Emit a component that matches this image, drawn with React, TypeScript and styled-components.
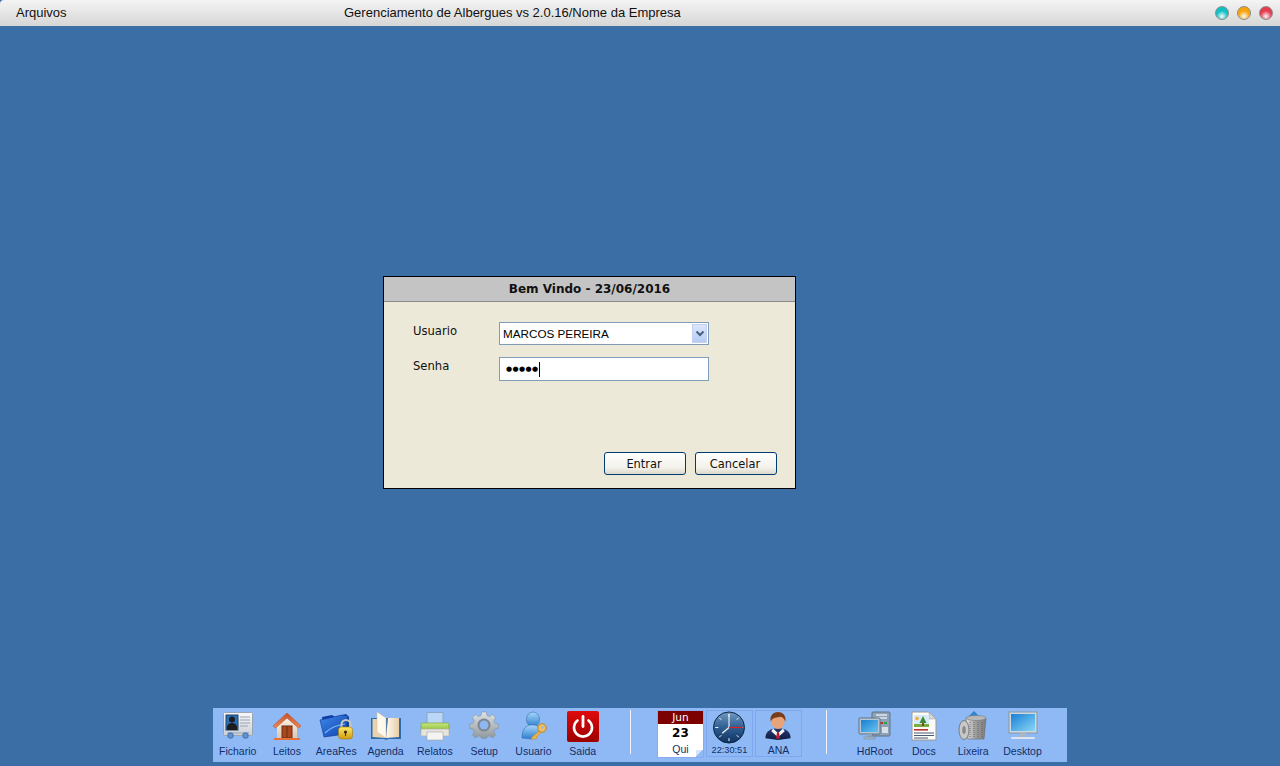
import * as React from "react";
import styled, { createGlobalStyle } from "styled-components";

const GlobalStyle = createGlobalStyle`
  html, body {
    margin: 0;
    padding: 0;
    height: 100%;
    overflow: hidden;
    background: #3a6ea5;
  }
  body {
    font-family: "Liberation Sans", Arial, sans-serif;
  }
`;

//************Icons***********
const FicharioIcon = () => (
  <svg width="32" height="30" viewBox="0 0 32 30">
    <defs>
      <linearGradient id="fic" x1="0" y1="0" x2="0" y2="1">
        <stop offset="0" stopColor="#f8f9fb" />
        <stop offset="1" stopColor="#c9cfd8" />
      </linearGradient>
    </defs>
    <rect x="1.5" y="1.5" width="29" height="23" rx="1" fill="url(#fic)" stroke="#9aa5b3" />
    <rect x="4" y="4" width="12" height="15" fill="#2a70b8" stroke="#1c3f68" />
    <circle cx="10" cy="8.5" r="3" fill="#1d1d1d" />
    <path d="M5 19v-3c0-2 2-4 5-4s5 2 5 4v3z" fill="#1d1d1d" />
    <path d="M18 6h10M18 9h10M18 12h10M18 15h8M5 22h22" stroke="#9aa3b2" strokeWidth="1" />
    <rect x="6" y="22" width="5" height="5" rx="1.5" fill="#5f93d1" stroke="#3b6ca8" />
    <rect x="21" y="22" width="5" height="5" rx="1.5" fill="#5f93d1" stroke="#3b6ca8" />
  </svg>
);

const LeitosIcon = () => (
  <svg width="32" height="30" viewBox="0 0 32 30">
    <defs>
      <linearGradient id="roof" x1="0" y1="0" x2="0" y2="1">
        <stop offset="0" stopColor="#c8502c" />
        <stop offset="1" stopColor="#ee8a55" />
      </linearGradient>
      <linearGradient id="wall" x1="0" y1="0" x2="0" y2="1">
        <stop offset="0" stopColor="#fff6ea" />
        <stop offset="1" stopColor="#dcc8b2" />
      </linearGradient>
    </defs>
    <path d="M6 14L16 5l10 9v13H6z" fill="url(#wall)" />
    <path d="M2 15L16 2l14 13-2.5 2L16 7 4.5 17z" fill="url(#roof)" stroke="#b5502a" strokeWidth="0.6" />
    <rect x="11" y="15" width="10" height="12" fill="#a8481c" stroke="#6f2d10" />
    <path d="M16 15v12" stroke="#6f2d10" />
    <rect x="3" y="27" width="26" height="2" fill="#e8703a" />
  </svg>
);

const AreaResIcon = () => (
  <svg width="34" height="30" viewBox="0 0 34 30">
    <defs>
      <linearGradient id="folder" x1="0" y1="0" x2="1" y2="1">
        <stop offset="0" stopColor="#3f8ae8" />
        <stop offset="1" stopColor="#0c3fb0" />
      </linearGradient>
      <linearGradient id="gold" x1="0" y1="0" x2="0" y2="1">
        <stop offset="0" stopColor="#ffe866" />
        <stop offset="1" stopColor="#d09a10" />
      </linearGradient>
    </defs>
    <path d="M3 6l10-2 3 2 11-3 3 3v17H5z" fill="#0d3fa5" />
    <path d="M1 9l22-5 6 1-2 18-22 3z" fill="url(#folder)" stroke="#0c3590" strokeWidth="0.6" />
    <path d="M6 22c6-6 12-8 20-9" stroke="#7fb6f5" strokeWidth="1.2" fill="none" />
    <path d="M22.5 17v-3.5a4.5 4.5 0 0 1 9 0V17" fill="none" stroke="#c8c8b8" strokeWidth="2" />
    <rect x="19.5" y="16" width="14" height="12" rx="3" fill="url(#gold)" stroke="#a67a08" strokeWidth="0.6" />
    <circle cx="26.5" cy="21" r="1.6" fill="#3a2a04" />
    <rect x="26" y="21" width="1" height="4" fill="#3a2a04" />
  </svg>
);

const AgendaIcon = () => (
  <svg width="32" height="30" viewBox="0 0 32 30">
    <defs>
      <linearGradient id="page" x1="0" y1="0" x2="1" y2="0">
        <stop offset="0" stopColor="#fffaf0" />
        <stop offset="1" stopColor="#e8cda6" />
      </linearGradient>
    </defs>
    <path d="M1 7h30v21H18l-2 1-2-1H1z" fill="#2e6ba8" />
    <path d="M2.5 8h11l2 19-13-1z" fill="#e9d2b0" />
    <path d="M16 27l13-1V7H18z" fill="url(#page)" />
    <path d="M7 1l9 6v20l-9-6z" fill="#fff9ec" stroke="#d4bb95" strokeWidth="0.5" />
  </svg>
);

const RelatosIcon = () => (
  <svg width="32" height="30" viewBox="0 0 32 30">
    <defs>
      <linearGradient id="printer" x1="0" y1="0" x2="0" y2="1">
        <stop offset="0" stopColor="#cbe87c" />
        <stop offset="1" stopColor="#76b02a" />
      </linearGradient>
    </defs>
    <rect x="8" y="1.5" width="16" height="12" fill="#bcd6f5" stroke="#88a7cc" />
    <rect x="2" y="12" width="28" height="10" rx="1.5" fill="url(#printer)" stroke="#6b9a2c" strokeWidth="0.6" />
    <rect x="2" y="18" width="28" height="7" fill="#e6e4dc" stroke="#b0aea4" strokeWidth="0.6" />
    <rect x="8" y="21" width="16" height="8" fill="#f4f4f2" stroke="#a5a5a0" strokeWidth="0.6" />
  </svg>
);

const SetupIcon = () => (
  <svg width="32" height="30" viewBox="0 0 32 30">
    <defs>
      <linearGradient id="gear" x1="0" y1="0" x2="0" y2="1">
        <stop offset="0" stopColor="#dfe3e6" />
        <stop offset="1" stopColor="#8f979d" />
      </linearGradient>
    </defs>
    <path
      d="M13.5 1h5l.8 4 2.8 1.2 3.4-2.3 3.5 3.5-2.3 3.4 1.2 2.8 4 .8v5l-4 .8-1.2 2.8 2.3 3.4-3.5 3.5-3.4-2.3-2.8 1.2-.8 1.7h-5l-.8-1.7-2.8-1.2-3.4 2.3-3.5-3.5 2.3-3.4-1.2-2.8-4-.8v-5l4-.8 1.2-2.8-2.3-3.4 3.5-3.5 3.4 2.3 2.8-1.2z"
      transform="translate(1.6 0) scale(0.9)"
      fill="url(#gear)"
      stroke="#858c92"
      strokeWidth="0.6"
    />
    <circle cx="16" cy="14" r="6.5" fill="#7d858b" />
    <circle cx="16" cy="14" r="4.5" fill="#8db8f2" />
  </svg>
);

const UsuarioIcon = () => (
  <svg width="30" height="30" viewBox="0 0 30 30">
    <defs>
      <linearGradient id="person" x1="0" y1="0" x2="0" y2="1">
        <stop offset="0" stopColor="#a9d6fa" />
        <stop offset="1" stopColor="#2a7ed0" />
      </linearGradient>
    </defs>
    <ellipse cx="15" cy="8.5" rx="6.5" ry="7.5" fill="url(#person)" stroke="#3270b0" strokeWidth="0.6" />
    <path d="M4 27c0-8 3-12 8-13h5c3 1 5 3 6 5l-9 9z" fill="url(#person)" stroke="#2e6cac" strokeWidth="0.6" />
    <circle cx="24" cy="17" r="4.2" fill="#f0c060" stroke="#b8831e" />
    <circle cx="24.5" cy="16.5" r="1.2" fill="#8db8f2" />
    <path d="M21 20l-8 7 1.8 1.8 1.5-1.2 1.2 1 1.5-1.5-.8-1 4.5-4z" fill="#f0b048" stroke="#b8831e" strokeWidth="0.5" />
  </svg>
);

const SaidaIcon = () => (
  <svg width="32" height="31" viewBox="0 0 32 31">
    <defs>
      <linearGradient id="power" x1="0" y1="0" x2="0" y2="1">
        <stop offset="0" stopColor="#e00a0a" />
        <stop offset="1" stopColor="#9c0000" />
      </linearGradient>
    </defs>
    <rect x="0" y="0" width="32" height="31" rx="2" fill="url(#power)" />
    <path d="M10.5 9.5a9 9 0 1 0 11 0" fill="none" stroke="#fff" strokeWidth="2.6" strokeLinecap="round" />
    <path d="M16 5.5v10" stroke="#fff" strokeWidth="2.8" strokeLinecap="round" />
  </svg>
);

const ClockIcon = () => (
  <svg width="34" height="34" viewBox="0 0 34 34">
    <defs>
      <linearGradient id="clockface" x1="0" y1="0" x2="0" y2="1">
        <stop offset="0" stopColor="#7199c2" />
        <stop offset="0.5" stopColor="#2f5f93" />
        <stop offset="1" stopColor="#0e3260" />
      </linearGradient>
    </defs>
    <circle cx="17" cy="17" r="16" fill="url(#clockface)" stroke="#0c2440" />
    <path d="M17 3v3M17 28v3M3 17h3M28 17h3M7 7l2 2M27 7l-2 2M7 27l2-2M27 27l-2-2" stroke="#fff" strokeWidth="1" />
    <path d="M17 17V3" stroke="#e8eef5" strokeWidth="1.2" />
    <path d="M17 17l-7 6" stroke="#f0f0f0" strokeWidth="1.4" />
    <path d="M17 17h14" stroke="#e02020" strokeWidth="1.2" />
  </svg>
);

const AnaIcon = () => (
  <svg width="30" height="32" viewBox="0 0 30 32">
    <defs>
      <linearGradient id="suit" x1="0" y1="0" x2="0" y2="1">
        <stop offset="0" stopColor="#26386e" />
        <stop offset="1" stopColor="#101c44" />
      </linearGradient>
    </defs>
    <path d="M2 28c0-6 4-9 9-10h8c5 1 9 4 9 10l-13 2z" fill="url(#suit)" />
    <path d="M10 18l5 5 5-5 2 3-7 6-7-6z" fill="#f2f2f2" />
    <path d="M14 22h2l1 6-2 1-2-1z" fill="#c01c28" />
    <ellipse cx="15" cy="10" rx="7" ry="8.5" fill="#e8a478" />
    <path d="M7.5 11C6 4 11 1 15 1s9 3 7.5 10c-1-3-2.5-4.5-5-5-3 1-8 0-10 5z" fill="#7a3d1a" />
  </svg>
);

const HdRootIcon = () => (
  <svg width="34" height="30" viewBox="0 0 34 30">
    <defs>
      <linearGradient id="screen1" x1="0" y1="0" x2="1" y2="1">
        <stop offset="0" stopColor="#1a7fd0" />
        <stop offset="1" stopColor="#66c4f2" />
      </linearGradient>
    </defs>
    <rect x="14" y="1" width="18" height="24" rx="1" fill="#8ea2b8" stroke="#5f7286" />
    <path d="M18 4h11M18 7h11" stroke="#dfe7ef" strokeWidth="1.4" />
    <rect x="22" y="11" width="3" height="2" fill="#c83030" />
    <rect x="26" y="11" width="3" height="2" fill="#30a040" />
    <rect x="24" y="16" width="6" height="6" fill="#d8dfe6" />
    <rect x="1" y="7" width="21" height="16" rx="1" fill="#b8c6d4" stroke="#5f7286" />
    <rect x="3" y="9" width="17" height="12" fill="url(#screen1)" />
    <rect x="9" y="23" width="5" height="3" fill="#8ea2b8" />
    <rect x="6" y="26" width="11" height="2" fill="#a8b8c8" stroke="#6f8296" strokeWidth="0.5" />
  </svg>
);

const DocsIcon = () => (
  <svg width="28" height="30" viewBox="0 0 28 30">
    <path d="M2 1h17l7 7v21H2z" fill="#fbfbf8" stroke="#9a9a94" />
    <path d="M19 1v7h7z" fill="#d8d8d4" stroke="#9a9a94" strokeWidth="0.5" />
    <rect x="4" y="4" width="15" height="12" fill="#d6eaf8" />
    <circle cx="7" cy="7.5" r="1.8" fill="#f0b030" />
    <path d="M4 16h15v-3H4z" fill="#7cae3c" />
    <path d="M13 5l-3.5 7h7z" fill="#3e8a34" />
    <rect x="12" y="12" width="2" height="3" fill="#7a4a20" />
    <rect x="4" y="18" width="14" height="1.6" fill="#c03030" />
    <path d="M4 22h20M4 24.5h20M4 27h14" stroke="#4a5a78" strokeWidth="1" />
  </svg>
);

const LixeiraIcon = () => (
  <svg width="32" height="32" viewBox="0 0 32 32">
    <defs>
      <linearGradient id="bin" x1="0" y1="0" x2="1" y2="0">
        <stop offset="0" stopColor="#e6e6e6" />
        <stop offset="0.5" stopColor="#9c9c9c" />
        <stop offset="1" stopColor="#7e7e7e" />
      </linearGradient>
    </defs>
    <path d="M17 0l6 6H11z" fill="#2f86d0" />
    <path d="M9 7h20l-2 21H11z" fill="url(#bin)" stroke="#666" strokeWidth="0.6" />
    <ellipse cx="19" cy="7" rx="10" ry="2.5" fill="#b8b8b8" stroke="#777" strokeWidth="0.6" />
    <path d="M13 11v15M17 11v15M21 11v15M25 11v15" stroke="#666" strokeWidth="1" strokeDasharray="1 1" />
    <ellipse cx="7" cy="19" rx="5" ry="9.5" fill="#c8c8c8" stroke="#7a7a7a" />
    <ellipse cx="7" cy="19" rx="1.8" ry="4" fill="#8a8a8a" />
  </svg>
);

const DesktopIcon = () => (
  <svg width="32" height="30" viewBox="0 0 32 30">
    <defs>
      <linearGradient id="screen2" x1="0" y1="0" x2="1" y2="1">
        <stop offset="0" stopColor="#1880d6" />
        <stop offset="1" stopColor="#8ad6f5" />
      </linearGradient>
    </defs>
    <rect x="2" y="1" width="28" height="21" fill="#cfd8e0" stroke="#8595a4" />
    <rect x="4" y="3" width="24" height="17" fill="url(#screen2)" />
    <rect x="13" y="22" width="6" height="4" fill="#aab6c0" />
    <rect x="4" y="26" width="24" height="2" rx="1" fill="#dfe5ea" />
  </svg>
);

const leftItems = [
  { label: "Fichario", icon: <FicharioIcon /> },
  { label: "Leitos", icon: <LeitosIcon /> },
  { label: "AreaRes", icon: <AreaResIcon /> },
  { label: "Agenda", icon: <AgendaIcon /> },
  { label: "Relatos", icon: <RelatosIcon /> },
  { label: "Setup", icon: <SetupIcon /> },
  { label: "Usuario", icon: <UsuarioIcon /> },
  { label: "Saida", icon: <SaidaIcon /> },
];

const rightItems = [
  { label: "HdRoot", icon: <HdRootIcon /> },
  { label: "Docs", icon: <DocsIcon /> },
  { label: "Lixeira", icon: <LixeiraIcon /> },
  { label: "Desktop", icon: <DesktopIcon /> },
];

const App: React.FunctionComponent = () => {
  return (
    <Page>
      <GlobalStyle />
      <TitleBar>
        <MenuLabel>Arquivos</MenuLabel>
        <AppTitle>Gerenciamento de Albergues vs 2.0.16/Nome da Empresa</AppTitle>
        <Lights>
          <Light color="#10c0c4" />
          <Light color="#f7a408" />
          <Light color="#e63c50" />
        </Lights>
      </TitleBar>

      <Desktop>
        <Dialog>
          <DialogHeader>Bem Vindo - 23/06/2016</DialogHeader>
          <DialogBody>
            <Form>
              <FieldLabel>Usuario</FieldLabel>
              <Field>
                MARCOS PEREIRA
                <DropButton>
                  <svg width="10" height="8" viewBox="0 0 10 8">
                    <path d="M1.5 1.5L5 5l3.5-3.5" fill="none" stroke="#4a5f85" strokeWidth="2" />
                  </svg>
                </DropButton>
              </Field>
              <FieldLabel>Senha</FieldLabel>
              <PasswordField>
                <Dots>●●●●●</Dots>
                <Caret />
              </PasswordField>
            </Form>
            <Buttons>
              <Button>Entrar</Button>
              <Button>Cancelar</Button>
            </Buttons>
          </DialogBody>
        </Dialog>
      </Desktop>

      <Dock>
        <LeftGroup>
          {leftItems.map((item) => (
            <DockItem key={item.label}>
              <DockIcon>{item.icon}</DockIcon>
              <DockLabel>{item.label}</DockLabel>
            </DockItem>
          ))}
        </LeftGroup>
        <Divider />
        <Status>
          <Calendar>
            <CalMonth>Jun</CalMonth>
            <CalDay>23</CalDay>
            <CalWeek>Qui</CalWeek>
          </Calendar>
          <StatusBox>
            <ClockIcon />
            <ClockText>22:30:51</ClockText>
          </StatusBox>
          <StatusBox>
            <AnaIcon />
            <AnaLabel>ANA</AnaLabel>
          </StatusBox>
        </Status>
        <Divider />
        <RightGroup>
          {rightItems.map((item) => (
            <DockItem key={item.label}>
              <DockIcon>{item.icon}</DockIcon>
              <DockLabel>{item.label}</DockLabel>
            </DockItem>
          ))}
        </RightGroup>
      </Dock>
    </Page>
  );
};

const Page = styled.div`
  display: flex;
  flex-direction: column;
  height: 766px;
  background: #3a6ea5;
`;
const TitleBar = styled.div`
  display: flex;
  align-items: center;
  height: 26px;
  box-sizing: border-box;
  padding: 0 7px 1px 16px;
  background: linear-gradient(#f4f4f4, #d6d6d6);
  border-top-left-radius: 4px;
  color: #111;
  font-size: 13px;
`;
const MenuLabel = styled.span`
  width: 328px;
`;
const AppTitle = styled.span`
  flex: 1;
`;
const Lights = styled.div`
  display: flex;
  gap: 8px;
`;
const Light = styled.span<{ color: string }>`
  width: 14px;
  height: 14px;
  border-radius: 50%;
  border: 1px solid #8c8c8c;
  box-sizing: border-box;
  background: radial-gradient(circle at 50% 78%, #fffc 0, ${({ color }) => color} 50%, ${({ color }) => color} 100%);
`;
const Desktop = styled.div`
  flex: 1;
  padding: 250px 0 0 383px;
`;
const Dialog = styled.div`
  display: flex;
  flex-direction: column;
  width: 413px;
  height: 213px;
  box-sizing: border-box;
  border: 1px solid #000;
  background: #ece9d8;
`;
const DialogHeader = styled.div`
  height: 25px;
  box-sizing: border-box;
  padding-top: 2px;
  background: #c4c4c4;
  border-bottom: 1px solid #8a8a8a;
  text-align: center;
  font: bold 12px "DejaVu Sans", sans-serif;
  line-height: 20px;
  color: #111;
`;
const DialogBody = styled.div`
  flex: 1;
  display: flex;
  flex-direction: column;
  justify-content: space-between;
  padding: 20px 18px 13px 29px;
`;
const Form = styled.div`
  display: grid;
  grid-template-columns: 86px 210px;
  row-gap: 12px;
`;
const FieldLabel = styled.div`
  padding-top: 1px;
  font: 11.6px "DejaVu Sans", sans-serif;
  line-height: 16px;
  color: #111;
`;
const Field = styled.div`
  display: flex;
  align-items: center;
  height: 23px;
  box-sizing: border-box;
  padding: 0 1px 0 3px;
  border: 1px solid #7f9db9;
  background: #fff;
  font: 11.7px "Liberation Sans", sans-serif;
  color: #000;
`;
const PasswordField = styled(Field)`
  height: 24px;
  padding-left: 6px;
`;
const DropButton = styled.div`
  display: flex;
  align-items: center;
  justify-content: center;
  margin-left: auto;
  width: 15px;
  height: 19px;
  background: linear-gradient(#dce6fa, #b6cbf4);
  border: 1px solid #c2d2f0;
  box-sizing: border-box;
`;
const Dots = styled.span`
  font: 7px "DejaVu Sans", sans-serif;
  letter-spacing: 0.4px;
`;
const Caret = styled.span`
  width: 1px;
  height: 15px;
  background: #000;
`;
const Buttons = styled.div`
  display: flex;
  justify-content: flex-end;
  gap: 9px;
`;
const Button = styled.div`
  display: flex;
  align-items: center;
  justify-content: center;
  width: 82px;
  height: 23px;
  box-sizing: border-box;
  padding-right: 2px;
  border: 1px solid #003c74;
  border-radius: 3px;
  background: linear-gradient(#ffffff, #f2f1ea 70%, #dcd8ca);
  font: 11.4px "DejaVu Sans", sans-serif;
  color: #111;
`;
const Dock = styled.div`
  display: flex;
  align-items: stretch;
  align-self: center;
  width: 854px;
  height: 54px;
  margin-bottom: 4px;
  background: #8fb9f5;
`;
const LeftGroup = styled.div`
  display: flex;
  margin-right: 22.6px;
`;
const RightGroup = styled.div`
  display: flex;
  margin-left: 22px;
`;
const DockItem = styled.div`
  display: flex;
  flex-direction: column;
  align-items: center;
  width: 49.3px;
  padding-top: 3px;
`;
const DockIcon = styled.div`
  display: flex;
  align-items: flex-start;
  justify-content: center;
  height: 32px;
`;
const DockLabel = styled.span`
  margin-top: 1px;
  font: 10.5px "Liberation Sans", sans-serif;
  line-height: 14px;
  color: #0f2f6a;
  white-space: nowrap;
`;
const Divider = styled.div`
  width: 2px;
  height: 44px;
  align-self: flex-start;
  margin-top: 2px;
  background: linear-gradient(90deg, #f0f2f5 50%, #a9b4c6 50%);
`;
const Status = styled.div`
  display: flex;
  align-items: flex-start;
  gap: 2px;
  margin: 0 24px 0 25px;
  padding-top: 2px;
`;
const Calendar = styled.div`
  position: relative;
  display: flex;
  flex-direction: column;
  align-items: center;
  width: 47px;
  height: 48px;
  box-sizing: border-box;
  border: 1px solid #8aaaf0;
  background: #fff;
  &::after {
    content: "";
    position: absolute;
    right: 0;
    bottom: 0;
    width: 7px;
    height: 7px;
    background: linear-gradient(135deg, #d6e4fb 50%, #8fb9f5 50%);
  }
`;
const CalMonth = styled.div`
  align-self: stretch;
  height: 13px;
  background: #7d0000;
  color: #fff;
  text-align: center;
  font: 10.5px/13px "DejaVu Sans", sans-serif;
`;
const CalDay = styled.div`
  font: bold 12px/18px "DejaVu Sans", sans-serif;
  color: #000;
`;
const CalWeek = styled.div`
  font: 10.5px/14px "Liberation Sans", sans-serif;
  color: #0f2f6a;
`;
const StatusBox = styled.div`
  display: flex;
  flex-direction: column;
  align-items: center;
  width: 47px;
  height: 47px;
  box-sizing: border-box;
  border: 1px solid #7fa6ee;
`;
const ClockText = styled.span`
  margin-top: 1px;
  font: 9.2px/11px "Liberation Sans", sans-serif;
  color: #0f2f6a;
`;
const AnaLabel = styled(DockLabel)`
  margin-top: 2px;
  line-height: 12px;
`;

export default App;
